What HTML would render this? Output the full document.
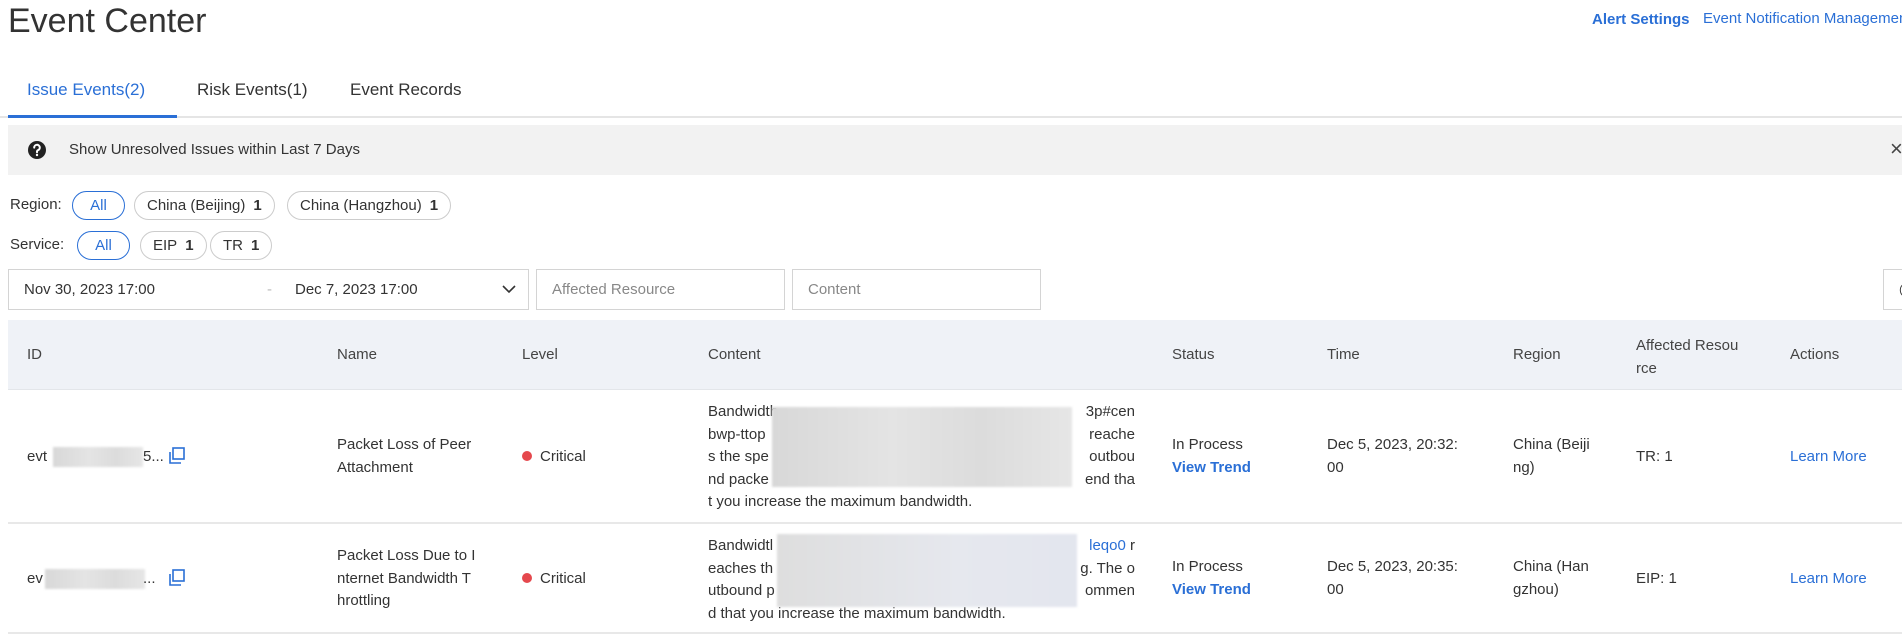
<!DOCTYPE html>
<html><head><meta charset="utf-8"><style>
*{box-sizing:border-box;margin:0;padding:0}
body{width:1902px;height:635px;overflow:hidden;background:#fff;font-family:"Liberation Sans",sans-serif;color:#333;font-size:16px;position:relative}
.a{position:absolute;white-space:nowrap}
.chip{position:absolute;height:29px;border:1px solid #ccc;border-radius:15px;font-size:15px;line-height:27px;padding:0 12px;color:#333}
.chip b{margin-left:8px}
.sel{border-color:#2a6fd6;color:#2a6fd6}
.inp{position:absolute;top:269px;height:41px;border:1px solid #d4d4d4;font-size:15px;line-height:39px;padding-left:15px;color:#888}
.blue{color:#2a6fd6 !important}
.th{position:absolute;font-size:15px;color:#444}
.td{position:absolute;font-size:15px;color:#333;line-height:22.5px;white-space:nowrap}
.blur{position:absolute;background:linear-gradient(90deg,#d8d8d8,#e4e4e4 40%,#dcdcdc 70%,#e6e6e6);filter:blur(1px)}
.dot{display:inline-block;width:10px;height:10px;border-radius:50%;background:#e5484d;margin-right:8px;vertical-align:0}
</style></head><body>
<div class="a" style="left:8px;top:0;font-size:34px;color:#333;line-height:42px">Event Center</div>
<div class="a blue" style="left:1592px;top:11px;font-size:15px;font-weight:bold">Alert Settings</div>
<div class="a blue" style="left:1703px;top:10px;font-size:15px">Event Notification Management</div>

<div class="a blue" style="left:27px;top:80px;font-size:17px">Issue Events(2)</div>
<div class="a" style="left:197px;top:80px;font-size:17px;color:#333">Risk Events(1)</div>
<div class="a" style="left:350px;top:80px;font-size:17px;color:#333">Event Records</div>
<div class="a" style="left:0;top:116px;width:1902px;height:2px;background:#e5e5e5"></div>
<div class="a" style="left:8px;top:115px;width:169px;height:3px;background:#2a6fd6"></div>

<div class="a" style="left:8px;top:125px;width:1894px;height:50px;background:#f2f2f2"></div>
<svg class="a" style="left:27px;top:140px" width="20" height="20" viewBox="0 0 20 20"><circle cx="10" cy="10" r="9" fill="#222"/><path d="M7.2 7.6a2.8 2.8 0 1 1 3.8 2.6c-.7.3-1 .8-1 1.5v.6" stroke="#fff" stroke-width="2" fill="none" stroke-linecap="round"/><circle cx="10" cy="15" r="1.2" fill="#fff"/></svg>
<div class="a" style="left:69px;top:141px;font-size:15px;color:#333">Show Unresolved Issues within Last 7 Days</div>
<div class="a" style="left:1890px;top:136px;font-size:22px;color:#444">×</div>

<div class="a" style="left:10px;top:196px;font-size:15px">Region:</div>
<div class="chip sel" style="left:72px;top:191px;width:53px;text-align:center;padding:0">All</div>
<div class="chip" style="left:134px;top:191px">China (Beijing)<b>1</b></div>
<div class="chip" style="left:287px;top:191px">China (Hangzhou)<b>1</b></div>
<div class="a" style="left:10px;top:236px;font-size:15px">Service:</div>
<div class="chip sel" style="left:77px;top:231px;width:53px;text-align:center;padding:0">All</div>
<div class="chip" style="left:140px;top:231px">EIP<b>1</b></div>
<div class="chip" style="left:210px;top:231px">TR<b>1</b></div>

<div class="inp" style="left:8px;width:521px;color:#333">Nov 30, 2023 17:00<span style="position:absolute;left:258px;color:#bbb">-</span><span style="position:absolute;left:286px">Dec 7, 2023 17:00</span>
<svg style="position:absolute;left:492px;top:14px" width="16" height="10" viewBox="0 0 16 10"><path d="M2 2l6 6 6-6" stroke="#333" stroke-width="1.6" fill="none"/></svg></div>
<div class="inp" style="left:536px;width:249px">Affected Resource</div>
<div class="inp" style="left:792px;width:249px">Content</div>
<div class="inp" style="left:1883px;width:40px;color:#333">◯</div>

<div class="a" style="left:8px;top:320px;width:1894px;height:70px;background:#eff2f7;border-bottom:1px solid #e3e6ea"></div>
<div class="th" style="left:27px;top:346px">ID</div>
<div class="th" style="left:337px;top:346px">Name</div>
<div class="th" style="left:522px;top:346px">Level</div>
<div class="th" style="left:708px;top:346px">Content</div>
<div class="th" style="left:1172px;top:346px">Status</div>
<div class="th" style="left:1327px;top:346px">Time</div>
<div class="th" style="left:1513px;top:346px">Region</div>
<div class="th" style="left:1636px;top:334px;line-height:23px">Affected Resou<br>rce</div>
<div class="th" style="left:1790px;top:346px">Actions</div>

<div class="a" style="left:8px;top:522px;width:1894px;height:2px;background:#e8e8e8"></div>

<!-- row 1 -->
<div class="td" style="left:27px;top:446px">evt</div>
<div class="blur" style="left:53px;top:447px;width:90px;height:20px"></div>
<div class="td" style="left:143px;top:446px">5...</div>
<svg class="a" style="left:167px;top:446px" width="20" height="20" viewBox="0 0 20 20"><rect x="6" y="2" width="11" height="11" fill="none" stroke="#2a6fd6" stroke-width="1.6"/><path d="M3 6v11h11" fill="none" stroke="#2a6fd6" stroke-width="1.6"/></svg>
<div class="td" style="left:337px;top:434px">Packet Loss of Peer<br>Attachment</div>
<div class="td" style="left:522px;top:446px"><span class="dot"></span>Critical</div>
<div class="td" style="left:708px;top:401px">Bandwidth<br>bwp-ttop<br>s the spe<br>nd packe<br>t you increase the maximum bandwidth.</div>
<div class="td" style="left:1075px;top:401px;text-align:right;width:60px">3p#cen<br>reache<br>outbou<br>end tha</div>
<div class="blur" style="left:772px;top:407px;width:300px;height:80px"></div>
<div class="td" style="left:1172px;top:434px">In Process<br><b class="blue">View Trend</b></div>
<div class="td" style="left:1327px;top:434px">Dec 5, 2023, 20:32:<br>00</div>
<div class="td" style="left:1513px;top:434px">China (Beiji<br>ng)</div>
<div class="td" style="left:1636px;top:446px">TR: 1</div>
<div class="td blue" style="left:1790px;top:446px">Learn More</div>

<!-- row 2 -->
<div class="td" style="left:27px;top:568px">ev</div>
<div class="blur" style="left:45px;top:569px;width:100px;height:20px"></div>
<div class="td" style="left:143px;top:568px">...</div>
<svg class="a" style="left:167px;top:568px" width="20" height="20" viewBox="0 0 20 20"><rect x="6" y="2" width="11" height="11" fill="none" stroke="#2a6fd6" stroke-width="1.6"/><path d="M3 6v11h11" fill="none" stroke="#2a6fd6" stroke-width="1.6"/></svg>
<div class="td" style="left:337px;top:545px">Packet Loss Due to I<br>nternet Bandwidth T<br>hrottling</div>
<div class="td" style="left:522px;top:568px"><span class="dot"></span>Critical</div>
<div class="td" style="left:708px;top:535px">Bandwidtl<br>eaches th<br>utbound p<br>d that you increase the maximum bandwidth.</div>
<div class="td" style="left:1060px;top:535px;text-align:right;width:75px"><span class="blue">leqo0</span> r<br>g. The o<br>ommen</div>
<div class="blur" style="left:777px;top:534px;width:300px;height:73px;background:linear-gradient(90deg,#dedede,#e6e8ee 60%,#e3e6ee)"></div>
<div class="td" style="left:1172px;top:556px">In Process<br><b class="blue">View Trend</b></div>
<div class="td" style="left:1327px;top:556px">Dec 5, 2023, 20:35:<br>00</div>
<div class="td" style="left:1513px;top:556px">China (Han<br>gzhou)</div>
<div class="td" style="left:1636px;top:568px">EIP: 1</div>
<div class="td blue" style="left:1790px;top:568px">Learn More</div>
<div class="a" style="left:8px;top:632px;width:1894px;height:2px;background:#e8e8e8"></div>
</body></html>
